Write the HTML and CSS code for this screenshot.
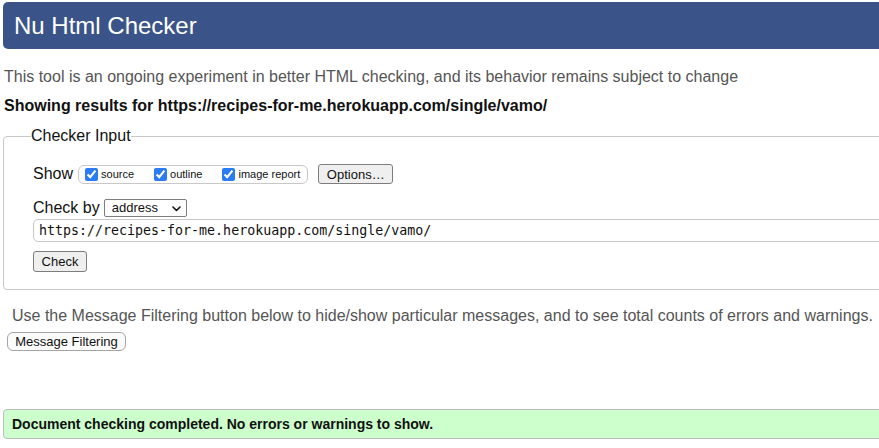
FILE: index.html
```html
<!DOCTYPE html>
<html lang="en">
<head>
<meta charset="utf-8">
<title>Nu Html Checker</title>
<link rel="stylesheet" href="styles.css">
</head>
<body>
<div class="page">
  <h1 class="title">Nu Html Checker</h1>
  <p class="intro">This tool is an ongoing experiment in better HTML checking, and its behavior remains subject to change</p>
  <p class="results">Showing results for https://recipes-for-me.herokuapp.com/single/vamo/</p>
  <fieldset class="checker">
    <legend class="legend">Checker Input</legend>
    <div class="row show-row">
      <span class="row-label">Show</span>
      <span class="opts">
        <label class="opt"><input type="checkbox" class="cb" checked>source</label>
        <label class="opt"><input type="checkbox" class="cb" checked>outline</label>
        <label class="opt opt-last"><input type="checkbox" class="cb" checked>image report</label>
      </span>
      <button class="btn btn-options" type="button">Options…</button>
    </div>
    <div class="row by-row">
      <span class="row-label">Check by</span>
      <span class="select">
        <span class="select-text">address</span>
        <svg class="chev" width="9" height="6" viewBox="0 0 9 6"><path d="M1 1 L4.5 4.5 L8 1" fill="none" stroke="#111" stroke-width="1.6" stroke-linecap="round" stroke-linejoin="round"/></svg>
      </span>
    </div>
    <input class="url" type="text" value="https://recipes-for-me.herokuapp.com/single/vamo/">
    <div class="check-wrap"><button class="btn btn-check" type="button">Check</button></div>
  </fieldset>
  <p class="filter-note">Use the Message Filtering button below to hide/show particular messages, and to see total counts of errors and warnings.</p>
  <div class="filter-wrap"><button class="btn btn-filter" type="button">Message Filtering</button></div>
  <p class="success">Document checking completed. No errors or warnings to show.</p>
</div>
</body>
</html>
```
FILE: styles.css
```css
html {
  overflow: hidden;
}
body {
  margin: 0;
  background: #fff;
  color: #111;
  font-family: "Liberation Sans", Arial, sans-serif;
}
.page {
  width: 1000px;
  padding: 2px 0 0 3px;
}
.title {
  margin: 0;
  height: 47px;
  line-height: 47px;
  padding-left: 11px;
  background: #3a5489;
  color: #fff;
  font-size: 24px;
  font-weight: normal;
  border-radius: 5px 0 0 5px;
}
.intro {
  margin: 19px 0 0 1px;
  font-size: 16px;
  line-height: 18px;
  color: #555;
}
.results {
  margin: 11px 0 0 1px;
  font-size: 16px;
  line-height: 18px;
  font-weight: bold;
  color: #111;
}
.checker {
  margin: 12px 0 0 0;
  border: 1px solid #c8c8c8;
  border-radius: 4px;
  padding: 19px 0 17px 29px;
}
.legend {
  padding: 0;
  margin-left: -2px;
  font-size: 16px;
  line-height: 18px;
  color: #111;
}
.row {
  display: flex;
  align-items: center;
  font-size: 16px;
  line-height: 18px;
}
.show-row {
  height: 20px;
}
.opts {
  display: inline-flex;
  align-items: center;
  box-sizing: border-box;
  height: 19px;
  margin-left: 5px;
  padding: 0 7px 0 6px;
  border: 1px solid #c8c8c8;
  border-radius: 6px;
  font-size: 11px;
  line-height: 13px;
}
.opt {
  display: inline-flex;
  align-items: center;
  margin-right: 20px;
}
.opt-last {
  margin-right: 0;
}
.cb {
  width: 13px;
  height: 13px;
  margin: 0 3px 0 0;
  accent-color: #2b7bf5;
}
.btn {
  box-sizing: border-box;
  padding: 0;
  font-family: "Liberation Sans", Arial, sans-serif;
  font-size: 13px;
  color: #111;
  background: #efefef;
  border: 1px solid #7d7d7d;
  border-radius: 3px;
}
.btn-options {
  width: 75px;
  height: 20px;
  margin-left: 10px;
}
.by-row {
  height: 18px;
  margin-top: 15px;
}
.select {
  position: relative;
  display: inline-flex;
  align-items: center;
  box-sizing: border-box;
  width: 83px;
  height: 18px;
  margin-left: 4px;
  padding-left: 7px;
  border: 1px solid #7d7d7d;
  border-radius: 2px;
  font-size: 13px;
}
.chev {
  position: absolute;
  right: 5px;
  top: 6px;
}
.url {
  display: block;
  box-sizing: border-box;
  width: 1000px;
  height: 23px;
  margin: 2px 0 0 0;
  padding: 0 5px;
  border: 1px solid #c8c8c8;
  border-radius: 5px;
  font-family: "DejaVu Sans Mono", "Liberation Mono", monospace;
  font-size: 13.3px;
  color: #111;
}
.check-wrap {
  margin-top: 9px;
  line-height: 0;
}
.btn-check {
  width: 54px;
  height: 21px;
}
.filter-note {
  margin: 17px 0 0 9px;
  font-size: 16px;
  line-height: 18px;
  color: #555;
}
.filter-wrap {
  margin: 7px 0 0 4px;
  line-height: 0;
}
.btn-filter {
  width: 119px;
  height: 19px;
  background: #fbfbfb;
  border: 1px solid #a5a5a5;
  border-radius: 6px;
}
.success {
  box-sizing: border-box;
  height: 30px;
  margin: 58px 0 0 0;
  padding-left: 8px;
  border: 1px solid #bcbcbc;
  border-radius: 4px;
  background: #ccffcc;
  font-size: 14px;
  line-height: 28px;
  font-weight: bold;
  color: #111;
}
```
